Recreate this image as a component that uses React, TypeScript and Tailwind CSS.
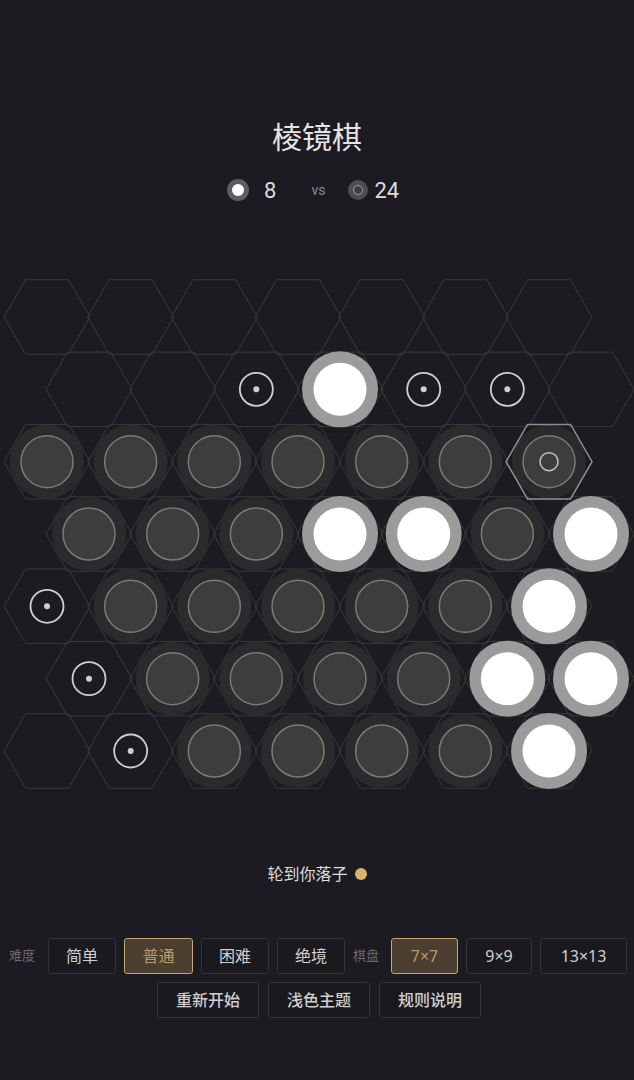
import React from "react";

type Cell = "." | "w" | "b" | "m" | "L";

// board state, 7x7, odd rows shifted right by half a column
const BOARD: string[] = [
  ".......",
  "..mwmm.",
  "bbbbbbL",
  "bbbwwbw",
  "mbbbbbw",
  "mbbbbww",
  ".mbbbbw",
];

const COL = 83.67;
const ROW = 72.33;
const R = 43;

function hexPoints(cx: number, cy: number, r: number) {
  const h = (r * Math.sqrt(3)) / 2;
  return [
    [cx - r, cy],
    [cx - r / 2, cy - h],
    [cx + r / 2, cy - h],
    [cx + r, cy],
    [cx + r / 2, cy + h],
    [cx - r / 2, cy + h],
  ]
    .map((p) => p.join(","))
    .join(" ");
}

function Stone({ x, y, kind }: { x: number; y: number; kind: Cell }) {
  if (kind === "w") {
    return (
      <g>
        <circle cx={x} cy={y} r={38} fill="#9b9b9b" />
        <circle cx={x} cy={y} r={26.5} fill="#ffffff" />
      </g>
    );
  }
  if (kind === "b" || kind === "L") {
    return (
      <g>
        <circle cx={x} cy={y} r={37} fill="#2b2b2e" />
        <circle cx={x} cy={y} r={26} fill="#3d3d3e" stroke="#7a7a7a" strokeWidth={1.5} />
        {kind === "L" && <circle cx={x} cy={y} r={9} fill="none" stroke="#c4c4c4" strokeWidth={1.5} />}
      </g>
    );
  }
  if (kind === "m") {
    return (
      <g>
        <circle cx={x} cy={y} r={16.5} fill="none" stroke="#cfcfcf" strokeWidth={1.8} />
        <circle cx={x} cy={y} r={3} fill="#cfcfcf" />
      </g>
    );
  }
  return null;
}

function Board() {
  const cells: { x: number; y: number; kind: Cell }[] = [];
  BOARD.forEach((row, r) => {
    row.split("").forEach((k, c) => {
      const x = (r % 2 === 0 ? 47 : 89) + c * COL;
      const y = 317 + r * ROW;
      cells.push({ x, y, kind: k as Cell });
    });
  });
  return (
    <svg width={634} height={530} viewBox="0 270 634 530" className="block">
      {cells.map((c, i) => (
        <polygon key={"h" + i} points={hexPoints(c.x, c.y, R)} fill="none" stroke="#3a393f" strokeWidth={1} />
      ))}
      {cells.map((c, i) => (
        <Stone key={"s" + i} x={c.x} y={c.y} kind={c.kind} />
      ))}
      {cells
        .filter((c) => c.kind === "L")
        .map((c, i) => (
          <polygon key={"l" + i} points={hexPoints(c.x, c.y, R)} fill="none" stroke="#8e8e92" strokeWidth={1.5} />
        ))}
    </svg>
  );
}

function Btn({ label, active, bold, w }: { label: string; active?: boolean; bold?: boolean; w: string }) {
  return (
    <button
      className={
        "h-[36px] rounded-[3px] text-[16px] flex items-center justify-center " +
        w +
        " " +
        (bold ? "font-medium " : "") +
        (active
          ? "border-[1.5px] border-[#c8a86c] bg-[#4a3f30] text-[#b99a62]"
          : "border border-[#34333a] bg-[#1a191e] text-[#cfcfcf]")
      }
    >
      {label}
    </button>
  );
}

export default function App() {
  return (
    <div
      className="w-[634px] h-[1080px] bg-[#1c1b21] flex flex-col items-center overflow-hidden"
      style={{ fontFamily: '"Noto Sans", "Noto Sans CJK SC", sans-serif' }}
    >
      <div className="mt-[116px] h-[42px] leading-[42px] text-[30px] text-[#e4e4e4]">棱镜棋</div>

      <div className="mt-[17px] h-[30px] w-[634px] flex items-center">
        <div className="ml-[227px] w-[22px] h-[22px] rounded-full bg-[#5e5e5e] flex items-center justify-center">
          <div className="w-[12px] h-[12px] rounded-full bg-white" />
        </div>
        <span className="ml-[15px] text-[22px] text-[#dcdcdc]" style={{ fontFamily: "Roboto, sans-serif" }}>
          8
        </span>
        <span className="ml-[35px] text-[14px] text-[#8a8a8a]" style={{ fontFamily: "Roboto, sans-serif" }}>
          vs
        </span>
        <div className="ml-[23px] w-[20px] h-[20px] rounded-full bg-[#4e4e4e] flex items-center justify-center">
          <div className="w-[10px] h-[10px] rounded-full border-[1.5px] border-[#a5a5a5] bg-[#3e3e3e]" />
        </div>
        <span className="ml-[6px] text-[22px] text-[#dcdcdc]" style={{ fontFamily: "Roboto, sans-serif" }}>
          24
        </span>
      </div>

      <div className="mt-[65px]">
        <Board />
      </div>

      <div className="mt-[62px] h-[24px] flex items-center gap-[7px] text-[16px] text-[#dedede]">
        <span>轮到你落子</span>
        <span className="w-[12px] h-[12px] rounded-full bg-[#d6b36e]" />
      </div>

      <div className="mt-[52px] flex items-center gap-[8px] ml-[2px]">
        <span className="mr-[5px] text-[13px] text-[#6c6c70]">难度</span>
        <Btn label="简单" w="w-[68px]" />
        <Btn label="普通" w="w-[69px]" active />
        <Btn label="困难" w="w-[68px]" />
        <Btn label="绝境" w="w-[68px]" />
        <span className="mr-[4px] text-[13px] text-[#6c6c70]">棋盘</span>
        <Btn label="7×7" w="w-[67px]" active />
        <Btn label="9×9" w="w-[66px]" />
        <Btn label="13×13" w="w-[87px]" />
      </div>

      <div className="mt-[8px] flex items-center gap-[9px] ml-[4px]">
        <Btn label="重新开始" w="w-[102px]" bold />
        <Btn label="浅色主题" w="w-[102px]" bold />
        <Btn label="规则说明" w="w-[102px]" bold />
      </div>
    </div>
  );
}
